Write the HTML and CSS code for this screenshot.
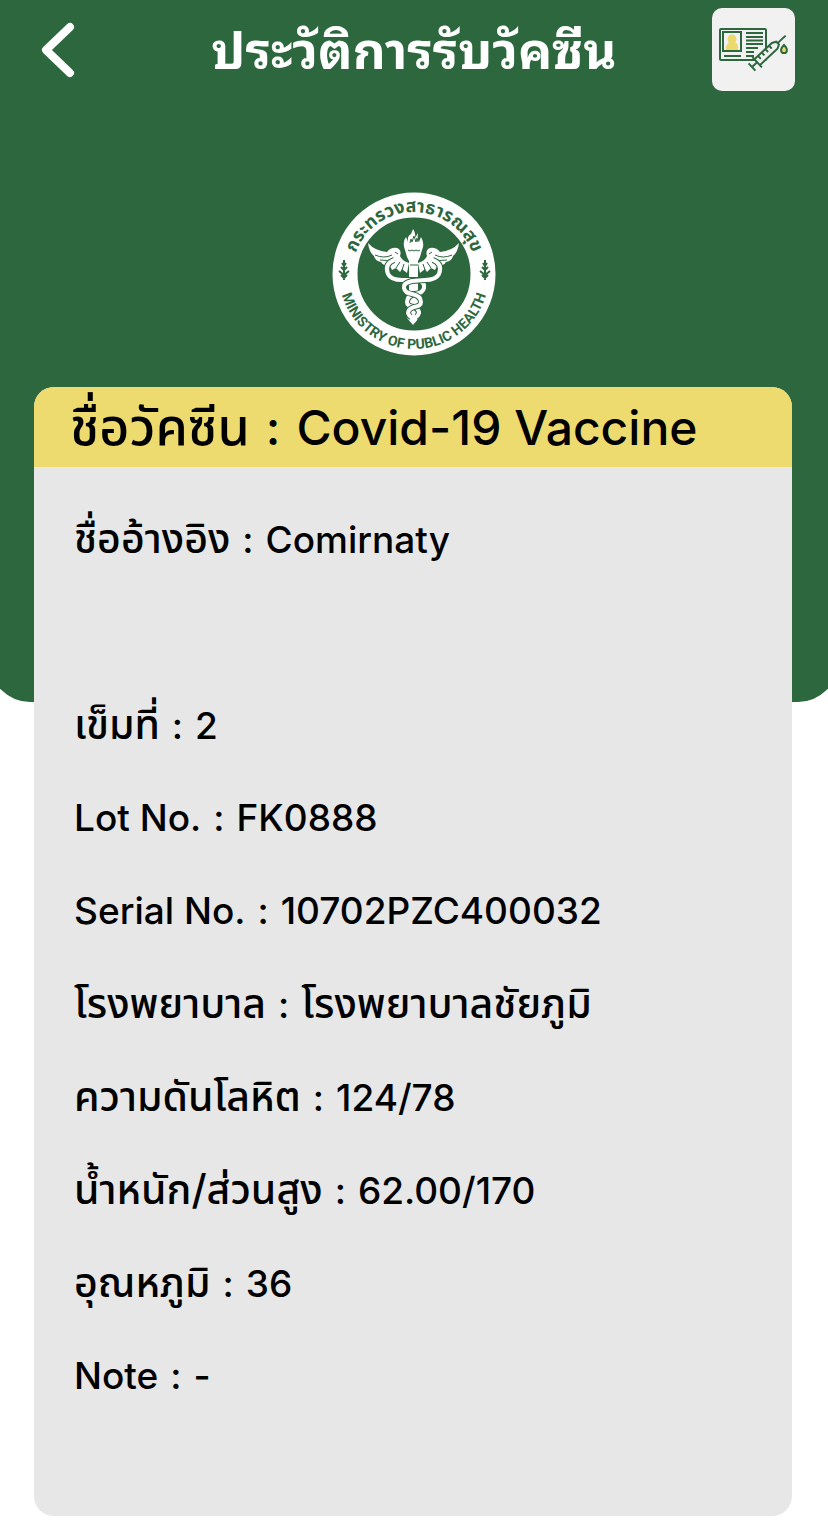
FILE: index.html
```html
<!DOCTYPE html>
<html lang="th">
<head>
<meta charset="utf-8">
<meta name="viewport" content="width=device-width, initial-scale=1">
<title>ประวัติการรับวัคซีน</title>
<link rel="stylesheet" href="styles.css">
</head>
<body>
<header class="hero">
  <nav class="topbar">
    <button class="back" type="button" aria-label="ย้อนกลับ">
      <svg class="back-icon" viewBox="0 0 38 60" aria-hidden="true"><path d="M32 7 8 30l24 23"/></svg>
    </button>
    <h1 class="title">ประวัติการรับวัคซีน</h1>
    <button class="card-button" type="button" aria-label="บัตรวัคซีน">
      <svg class="card-icon" viewBox="12 8 83 83" aria-hidden="true">
        <g fill="none" stroke="#2c673d" stroke-width="2">
          <rect x="20" y="29" width="46" height="31" rx="1"/>
          <rect x="23" y="32" width="18" height="19" fill="#f1f1f1"/>
          <path d="M46 33h17M46 37h17M46 40.500h17M46 44h17M46 48h12M46 52h8M24 56h17M46 56h8"/>
        </g>
        <g fill="#ecd96c"><circle cx="32" cy="39" r="4.500"/><path d="M26 50v-3q1-4 4-5h4q4 1 4 5v3z"/></g>
        <g transform="translate(52 67) rotate(-43)" stroke="#2c673d" stroke-width="2" fill="#f1f1f1">
          <path d="M0-5V5M0 0h7M7-7V7M7-4h24l4 2v4l-4 2H7zM35 0h11M12-4v4M17-4v4M22-4v4M27-4v4" />
        </g>
        <path d="M84 45q5 5 1.500 8h-3q-3.500-3 1.500-8z" fill="#ecd96c" stroke="#2c673d" stroke-width="2"/>
      </svg>
    </button>
  </nav>
  <svg class="emblem" viewBox="7 8 164 164" role="img" aria-label="กระทรวงสาธารณสุข Ministry of Public Health">
    <defs>
      <path id="arc-top" d="M27 90a62 62 0 0 1 124 0"/>
      <path id="arc-bottom" d="M14 90a75 75 0 0 0 150 0"/>
      <g id="wing">
        <path fill="#fff" d="M43 59Q50 67 62 68Q66 63 72 64Q77 66 75 72Q77 77 84 79L82 89L77 85L75 88L71 84L67 86L65 82Q58 82 56 78Q50 77 49 72Q44 68 43 59z"/>
        <path class="feather" d="M50 71q9 4 17 0M55 76q8 2 14-2M60 80q7 0 11-4M70 68l3 2M71 84l4-6M77 86l2-6"/>
      </g>
      <g id="ornament">
        <path d="M19 76v20M16 83l3 3 3-3M14 87l5 4 5-4M16 91l3 3 3-3M17 79l2 3 2-3"/>
      </g>
    </defs>
    <circle cx="89" cy="90" r="69" fill="none" stroke="#fff" stroke-width="25"/>
    <text class="emblem-thai"><textPath href="#arc-top" startOffset="50%">กระทรวงสาธารณสุข</textPath></text>
    <text class="emblem-latin"><textPath href="#arc-bottom" startOffset="50%">MINISTRY OF PUBLIC HEALTH</textPath></text>
    <g stroke="#2c673d" stroke-width="2" fill="none">
      <use href="#ornament"/>
      <use href="#ornament" x="141"/>
    </g>
    <!-- Wings -->
    <use href="#wing"/>
    <use href="#wing" transform="translate(177 0) scale(-1 1)"/>
    <!-- Torch -->
    <path fill="#fff" d="M80 66Q77 58 81 53L83 58Q82 52 86 50L88 45Q91 49 90 54L93 49Q92 55 94 58L96 53Q100 60 97 66L95 73L93 77V134H94L88 141L82 134H84V77L82 73z"/>
    <!-- Twin serpents -->
    <path class="snake-edge" d="M69 76q-10 4-6 14 3 6 14 6h16q7 2 6 8-1 5-9 6-8 2-8 8 0 4 7 5 5 2 5 6-1 3-3 4"/>
    <path class="snake" d="M69 76q-10 4-6 14 3 6 14 6h16q7 2 6 8-1 5-9 6-8 2-8 8 0 4 7 5 5 2 5 6-1 3-3 4"/>
    <path class="snake-edge" d="M108 76q10 4 6 14-3 6-14 6l-13 1q-9 2-8 7 1 5 8 6 9 2 9 8 0 4-7 5-6 2-6 6 1 3 3 4"/>
    <path class="snake" d="M108 76q10 4 6 14-3 6-14 6l-13 1q-9 2-8 7 1 5 8 6 9 2 9 8 0 4-7 5-6 2-6 6 1 3 3 4"/>
    <path class="feather" d="M85 59l1-4 1 3 2-6 2 6 1-4 1 4M83 66l2 1 2-1 2 1 2-1 2 1 2-1M85 81h8"/>
  </svg>
</header>
<main class="record">
  <h2 class="record-title"><span class="thai">ชื่อวัคซีน</span> <span>:</span> <span>Covid-19 Vaccine</span></h2>
  <ul class="details">
    <li class="detail reference"><span class="thai">ชื่ออ้างอิง</span> <span>:</span> <span>Comirnaty</span></li>
    <li class="detail"><span class="thai">เข็มที่</span> <span>:</span> <span>2</span></li>
    <li class="detail"><span>Lot No.</span> <span>:</span> <span>FK0888</span></li>
    <li class="detail"><span>Serial No.</span> <span>:</span> <span>10702PZC400032</span></li>
    <li class="detail"><span class="thai">โรงพยาบาล</span> <span>:</span> <span class="thai">โรงพยาบาลชัยภูมิ</span></li>
    <li class="detail"><span class="thai">ความดันโลหิต</span> <span>:</span> <span>124/78</span></li>
    <li class="detail"><span class="thai">น้ำหนัก/ส่วนสูง</span> <span>:</span> <span>62.00/170</span></li>
    <li class="detail"><span class="thai">อุณหภูมิ</span> <span>:</span> <span>36</span></li>
    <li class="detail"><span>Note</span> <span>:</span> <span>-</span></li>
  </ul>
</main>
</body>
</html>
```
FILE: styles.css
```css
* { box-sizing: border-box; }

body {
  margin: 0;
  overflow-x: hidden;
  background: #fff;
  color: #000;
  font-family: Inter, "Noto Sans Thai", "Noto Sans", sans-serif;
}

/* The rounded bottom corners run past both window edges. */
.hero {
  display: flex;
  flex-direction: column;
  align-items: center;
  gap: 101px;
  margin: 0 -10px;
  padding: 8px 43px 346px;
  background: #2c673d;
  border-radius: 0 0 40px 40px;
}

.topbar {
  display: flex;
  align-items: center;
  justify-content: space-between;
  width: 100%;
}

.back, .card-button {
  display: block;
  padding: 0;
  border: 0;
  background: none;
  cursor: pointer;
}

.back { width: 83px; text-align: left; }

.back-icon {
  display: block;
  width: 38px;
  height: 60px;
  margin-left: 5px;
  fill: none;
  stroke: #fff;
  stroke-width: 8px;
  stroke-linecap: round;
  stroke-linejoin: round;
}

.title {
  margin: 0;
  padding-bottom: 8px;
  color: #fff;
  font-family: "Noto Sans Thai Looped", "Noto Looped Thai", Loma, Garuda, Waree, "Noto Sans Thai", "Noto Sans", sans-serif;
  font-size: 51px;
  line-height: 64px;
  font-weight: 700;
  white-space: nowrap;
}

.card-button {
  width: 83px;
  height: 83px;
  border-radius: 10px;
  background: #f1f1f1;
}

.card-icon { display: block; width: 100%; }

.emblem { display: block; width: 164px; height: 164px; }

.emblem-thai, .emblem-latin {
  fill: #2c673d;
  font-weight: 700;
  text-anchor: middle;
}

.emblem-thai { font-size: 18px; }
.emblem-latin { font-family: Roboto, sans-serif; font-size: 14px; }

.feather { fill: none; stroke: #2c673d; stroke-width: 1px; }
.snake-edge { fill: none; stroke: #2c673d; stroke-width: 6px; }
.snake { fill: none; stroke: #fff; stroke-width: 4px; stroke-linecap: round; }

.record {
  margin: -315px 36px 19px 34px;
  overflow: hidden;
  border-radius: 20px;
  background: #e7e7e7;
}

.record-title, .detail {
  display: flex;
  align-items: baseline;
  font-weight: 500;
}

.record-title {
  gap: 16px;
  height: 80px;
  margin: 0;
  padding: 0 36px;
  background: #eddb70;
  font-size: 48px;
  line-height: 80px;
}

.record-title .thai { font-size: 52px; }

.details {
  margin: 0;
  padding: 25px 40px 94px;
  list-style: none;
}

.detail {
  gap: 12px;
  height: 93px;
  font-size: 37px;
  line-height: 93px;
}

.detail .thai { font-size: 41px; }

.reference { margin-bottom: 93px; }
```
